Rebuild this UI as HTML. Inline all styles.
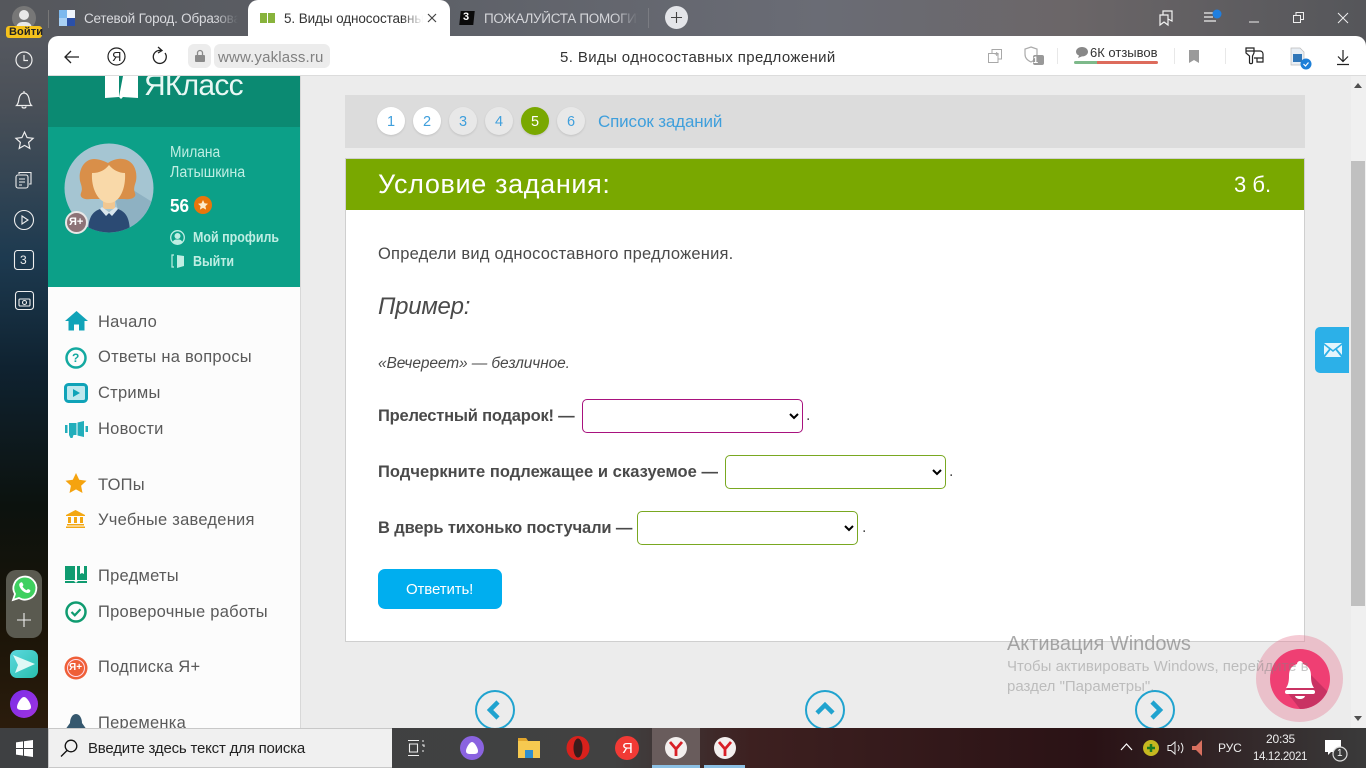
<!DOCTYPE html>
<html lang="ru"><head><meta charset="utf-8"><title>5. Виды односоставных предложений</title>
<style>
*{box-sizing:border-box}
html,body{margin:0;padding:0;width:1366px;height:768px;overflow:hidden;background:#ececec;font-family:"Liberation Sans",sans-serif;color:#4a4a4a}
.a{position:absolute}
.t{position:absolute;white-space:nowrap;line-height:1}
svg{position:absolute;overflow:visible}
select{position:absolute;height:34px;width:221px;background:#fff;border-radius:5px;border:1px solid #79a821;font-size:14px;outline:0;padding:0}
.n{width:28px;height:28px;top:107px;border-radius:50%;text-align:center;line-height:30px;font-size:14.5px;color:#3f9fdc;position:absolute;background:#e8e8e8;box-shadow:0 1px 2px rgba(0,0,0,.12)}
.m{font-size:16.5px;left:50px;color:#5a5a5a;letter-spacing:.25px}
.b{font-weight:bold;font-size:16.5px;color:#4a4a4a;left:378px}
.f{-webkit-mask-image:linear-gradient(90deg,#000 85%,transparent);mask-image:linear-gradient(90deg,#000 85%,transparent)}
</style></head><body>
<!-- top frame -->
<div class="a" style="left:0;top:0;width:1366px;height:768px;background:linear-gradient(90deg,#55575c 0,#5d6067 30%,#6a6c75 60%,#6b6668 78%,#55565a 100%)"></div>
<div class="a" style="left:0;top:36px;width:48px;height:692px;background:linear-gradient(180deg,#55585f 0,#4a5058 10%,#1d3a50 32%,#0f2230 48%,#0c120e 68%,#1a1408 85%,#2b1c0c 100%)"></div>
<!-- tabs -->
<div class="a" style="left:48px;top:10px;width:1px;height:18px;background:#777"></div>
<svg style="left:12px;top:5px" width="26" height="26" viewBox="0 0 26 26"><circle cx="12" cy="13" r="12" fill="#777"/><circle cx="12" cy="10" r="5" fill="#e8e8e8"/><path d="M4 23c1-6 5-6 8-6s7 0 8 6z" fill="#e8e8e8"/></svg>
<div class="a" style="left:6px;top:26px;width:36px;height:12px;background:#f6c21c;border-radius:3px"></div>
<div class="t" style="left:9px;top:27px;font-size:11px;font-weight:bold;color:#222;letter-spacing:.1px">Войти</div>
<svg style="left:59px;top:10px" width="16" height="16"><rect width="16" height="16" fill="#eef4fb"/><rect x="0" y="0" width="8" height="8" fill="#7cb8ee"/><rect x="8" y="8" width="8" height="8" fill="#2b50a8"/><rect x="0" y="8" width="8" height="8" fill="#a9d1f5"/></svg>
<div class="t f" style="left:84px;top:11px;font-size:13.5px;color:#d9dade;width:154px;overflow:hidden;letter-spacing:-.2px;line-height:15px">Сетевой Город. Образова</div>
<div class="a" style="left:248px;top:0;width:202px;height:37px;background:#fff;border-radius:10px 10px 0 0"></div>
<svg style="left:260px;top:13px" width="15" height="11"><rect width="7" height="10" fill="#88b33c"/><rect x="8" width="7" height="10" fill="#88b33c"/></svg>
<div class="t f" style="left:284px;top:11px;font-size:13.5px;color:#333;width:139px;overflow:hidden;line-height:15px;letter-spacing:-.1px">5. Виды односоставных</div>
<svg style="left:426px;top:12px" width="12" height="12"><path d="M2 2l8 8M10 2l-8 8" stroke="#444" stroke-width="1.2"/></svg>
<div class="a" style="left:460px;top:11px;width:14px;height:14px;background:#0a0a0a;transform:skewX(-6deg)"></div>
<div class="t" style="left:463px;top:12px;font-size:11px;font-weight:bold;color:#fff">3</div>
<div class="t f" style="left:484px;top:11px;font-size:13.5px;color:#d5d6da;width:154px;overflow:hidden;line-height:15px;letter-spacing:-.3px">ПОЖАЛУЙСТА ПОМОГИТ</div>
<div class="a" style="left:648px;top:8px;width:1px;height:20px;background:#7a7c82"></div>
<div class="a" style="left:665px;top:6px;width:23px;height:23px;border-radius:50%;background:#e4e5e9"></div>
<svg style="left:670px;top:11px" width="13" height="13"><path d="M6.500 1v11M1 6.500h11" stroke="#444" stroke-width="1.100"/></svg>
<!-- window controls -->
<svg style="left:1158px;top:10px" width="16" height="16" fill="none" stroke="#f2f2f2" stroke-width="1.200"><path d="M2 5h8v10l-4-3-4 3zM5 5V1h9v10l-4-2"/></svg>
<svg style="left:1203px;top:9px" width="20" height="15"><path d="M1 4h9M1 8h9M1 12h12" stroke="#eee" stroke-width="1.200"/><circle cx="14" cy="5" r="4.500" fill="#1f7fe0"/></svg>
<svg style="left:1249px;top:21px" width="10" height="2"><path d="M0 1h10" stroke="#eee"/></svg>
<svg style="left:1293px;top:12px" width="11" height="11" fill="none" stroke="#eee"><path d="M.5 3.500h7v7h-7zM3 3V.5h7.500v7H8"/></svg>
<svg style="left:1337px;top:12px" width="12" height="12"><path d="M1 1l10 10M11 1L1 11" stroke="#eee" stroke-width="1"/></svg>
<!-- sidebar icons -->
<svg style="left:15px;top:51px" width="18" height="18" fill="none" stroke="#eee" stroke-width="1.200"><circle cx="9" cy="9" r="8"/><path d="M9 4v5.500h4"/></svg>
<svg style="left:15px;top:91px" width="18" height="19" fill="none" stroke="#eee" stroke-width="1.200"><path d="M1.500 14.500c2-2 2-4 2.500-7S6.500 2 9 2s4.500 2.500 5 5.500.5 5 2.500 7zM7 15.500c0 2 4 2 4 0M9 0v2"/></svg>
<svg style="left:15px;top:131px" width="19" height="18" fill="none" stroke="#eee" stroke-width="1.200"><path d="M9.500 1l2.600 5.600 6 .7-4.500 4.100 1.200 6-5.300-3-5.300 3 1.200-6L.9 7.300l6-.7z"/></svg>
<svg style="left:15px;top:171px" width="18" height="18" fill="none" stroke="#eee" stroke-width="1.100"><rect x="1" y="4" width="12" height="13" rx="2"/><path d="M4 3V1.500h12V13h-2M4 8h6M4 11h6M4 14h3"/></svg>
<svg style="left:14px;top:210px" width="20" height="20" fill="none" stroke="#eee" stroke-width="1.100"><circle cx="10" cy="10" r="9.500"/><path d="M8 6l6 4-6 4z"/></svg>
<svg style="left:14px;top:250px" width="20" height="20" fill="none" stroke="#eee" stroke-width="1.100"><rect x=".5" y=".5" width="19" height="19" rx="3"/></svg>
<div class="t" style="left:20px;top:254px;font-size:12px;color:#eee">3</div>
<svg style="left:15px;top:291px" width="19" height="20" fill="none" stroke="#eee" stroke-width="1.100"><rect x=".5" y=".5" width="18" height="18" rx="3"/><rect x="4" y="8" width="11" height="7" rx="1"/><circle cx="9.500" cy="11.500" r="2"/></svg>
<div class="a" style="left:6px;top:570px;width:36px;height:68px;border-radius:10px;background:#5a5a50"></div>
<svg style="left:12px;top:576px" width="25" height="25"><path d="M1 24l2-6a11.500 11.500 0 1 1 4 4z" fill="#3fd060" stroke="#fff" stroke-width="1.800"/><path d="M8 7c1-1 2-1 2.500 0l1 2-1 1.500c1 1.700 2.200 2.800 4 3.700l1.500-1.200 2.200 1c.5 1.500-.7 3-2.500 3-4 0-8-4.500-8.500-8 0-1 .3-1.500.8-2z" fill="#fff"/></svg>
<svg style="left:16px;top:612px" width="16" height="16"><path d="M8 1v14M1 8h14" stroke="#eee" stroke-width="1.100"/></svg>
<div class="a" style="left:10px;top:650px;width:28px;height:28px;border-radius:7px;background:linear-gradient(135deg,#5cd8de,#28bfae)"></div>
<svg style="left:12px;top:655px" width="24" height="18"><path d="M1 0l22 9L3 18l3-8z" fill="#dff8f6"/></svg>
<div class="a" style="left:10px;top:690px;width:28px;height:28px;border-radius:50%;background:linear-gradient(135deg,#7a2de8,#a033e0)"></div>
<svg style="left:17px;top:697px" width="14" height="13"><path d="M7 0c3 0 7 7 7 10s-3 3-7 3-7 0-7-3S4 0 7 0z" fill="#fff"/></svg>
<!-- toolbar -->
<div class="a" style="left:48px;top:36px;width:1318px;height:40px;background:#fff;border-radius:10px 10px 0 0;border-bottom:1px solid #dcdcdc"></div>
<svg style="left:64px;top:50px" width="16" height="14" fill="none" stroke="#222" stroke-width="1.300"><path d="M15 7H1M7 1L1 7l6 6"/></svg>
<svg style="left:107px;top:47px" width="19" height="19" fill="none" stroke="#222" stroke-width="1.200"><circle cx="9.500" cy="9.500" r="8.500"/></svg>
<div class="t" style="left:112px;top:50px;font-size:13px;color:#222">Я</div>
<svg style="left:152px;top:46px" width="16" height="18" fill="none" stroke="#222" stroke-width="1.300"><path d="M13 7a6.500 6.500 0 1 1-4-2.500M6 1l4 3.500L6 7"/></svg>
<div class="a" style="left:188px;top:44px;width:23px;height:24px;background:#ececec;border-radius:6px"></div>
<svg style="left:195px;top:49px" width="10" height="13"><path d="M2.500 6V4a2.500 2.500 0 0 1 5 0v2" fill="none" stroke="#8a8a8a" stroke-width="1.300"/><rect y="6" width="10" height="7" rx="1" fill="#8a8a8a"/></svg>
<div class="a" style="left:214px;top:44px;width:116px;height:24px;background:#ececec;border-radius:6px"></div>
<div class="t" style="left:218px;top:50px;font-size:15px;color:#808080;letter-spacing:.15px">www.yaklass.ru</div>
<div class="t" style="left:560px;top:50px;font-size:15px;color:#333;letter-spacing:.38px">5. Виды односоставных предложений</div>
<svg style="left:988px;top:49px" width="14" height="14" fill="none" stroke="#a8a8a8"><path d="M4 4V.5h9.500V10H10M.5 4.500H10V13.500H.5zM8.700 3v4M6.700 5h4"/></svg>
<svg style="left:1024px;top:46px" width="20" height="20"><path d="M7 1l6 2v5c0 4-2 6-6 8-4-2-6-4-6-8V3z" fill="none" stroke="#aaa" stroke-width="1.200"/><rect x="9" y="9" width="11" height="10" rx="2" fill="#999"/></svg>
<div class="t" style="left:1033px;top:56px;font-size:9px;font-weight:bold;color:#fff">1</div>
<div class="a" style="left:1057px;top:48px;width:1px;height:16px;background:#e8e8e8"></div>
<svg style="left:1076px;top:47px" width="12" height="11"><path d="M6 0c3.300 0 6 2 6 4.700S9.300 9.400 6 9.400L2 11l1-2.500C1 7.700 0 6.300 0 4.700 0 2 2.700 0 6 0z" fill="#888"/></svg>
<div class="t" style="left:1090px;top:46px;font-size:13px;color:#333">6К отзывов</div>
<div class="a" style="left:1074px;top:61px;width:23px;height:3px;background:#7db98a;border-radius:2px 0 0 2px"></div>
<div class="a" style="left:1097px;top:61px;width:61px;height:3px;background:#dd6b5c;border-radius:0 2px 2px 0"></div>
<div class="a" style="left:1174px;top:48px;width:1px;height:16px;background:#e8e8e8"></div>
<svg style="left:1189px;top:50px" width="10" height="13"><path d="M0 0h10v13l-5-3-5 3z" fill="#9a9a9a"/></svg>
<div class="a" style="left:1225px;top:48px;width:1px;height:16px;background:#e8e8e8"></div>
<svg style="left:1245px;top:47px" width="19" height="18" fill="none" stroke="#222" stroke-width="1.200"><path d="M1 1h8v5L7.500 9v6.500c0 1.500-3 1.500-3 0V9L1 6zM1 4h8M9 4h6a3 3 0 0 1 3 3v4H9M12 11v4h6v-4"/></svg>
<svg style="left:1291px;top:47px" width="22" height="23"><path d="M0 1h9l4 4v13H0z" fill="#e8eef4" stroke="#bbb" stroke-width=".7"/><rect x="2" y="7" width="9" height="8" fill="#2f76b8"/><circle cx="15" cy="17" r="5.500" fill="#1d7fd8"/><path d="M12.500 17l2 2 3-3.500" stroke="#fff" fill="none" stroke-width="1.200"/></svg>
<svg style="left:1336px;top:50px" width="14" height="15" fill="none" stroke="#222" stroke-width="1.200"><path d="M7 0v11M2 6.500L7 11.500l5-5M1 14.500h12"/></svg>
<!-- page -->
<div class="a" style="left:48px;top:76px;width:1318px;height:652px;background:#ececec;overflow:hidden">
<div class="a" style="left:0;top:0;width:253px;height:652px;background:#fcfcfc;border-right:1px solid #d8d8d8"></div>
<div class="a" style="left:0;top:0;width:252px;height:51px;background:#0b8a72"></div>
<div class="a" style="left:0;top:51px;width:252px;height:160px;background:#0ca088"></div>
<svg style="left:57px;top:0" width="33" height="24"><path d="M0 0h14v21l-14 1zM18 0h15v22l-15-1-2 2-2-2z" fill="#fff"/></svg>
<div class="t" style="left:96px;top:-5px;font-size:30px;color:#e8f8f4;letter-spacing:-.75px">ЯКласс</div>
<!-- avatar -->
<svg style="left:16px;top:67px" width="90" height="90" viewBox="0 0 90 90"><defs><clipPath id="c"><circle cx="45" cy="45" r="44.500"/></clipPath></defs><circle cx="45" cy="45" r="44.500" fill="#a5c5d2"/><g clip-path="url(#c)"><path d="M45 32L90 60V90H60z" fill="#8eb1c2"/><path d="M27 56c-6 1-12-1-10-6 2-5 0-8-1-12-2-12 5-22 14-22 5 0 10 2 14 4 4-3 10-5 15-4 9 1 15 10 13 22-1 4-3 7-1 12 2 5-5 7-11 6z" fill="#d98f49"/><path d="M39 52h12v14H39z" fill="#f1c791"/><path d="M28 30c8 0 13-3 17-8 4 5 10 8 16 8 1 15-5 30-16 30S27 45 28 30z" fill="#f9d9a9"/><path d="M24 92c0-18 4-24 15-27l6 4 6-4c11 3 15 9 15 27z" fill="#2b4a73"/><path d="M38 64l7 5 7-5 2 2-6 7-3-3-3 3-6-7z" fill="#d9e6ed"/></g></svg>
<div class="a" style="left:17px;top:135px;width:23px;height:23px;border-radius:50%;background:#8d7377;border:2px solid #e8e8e8"></div>
<div class="t" style="left:21px;top:141px;font-size:11px;font-weight:bold;color:#fff">Я+</div>
<div class="t" style="left:122px;top:69px;font-size:15.5px;color:#bfeee3;transform:scaleX(.89);transform-origin:0 0">Милана</div>
<div class="t" style="left:122px;top:89px;font-size:15.5px;color:#bfeee3;transform:scaleX(.92);transform-origin:0 0">Латышкина</div>
<div class="t" style="left:122px;top:121px;font-size:18px;font-weight:bold;color:#fff;transform:scaleX(.95);transform-origin:0 0">56</div>
<div class="a" style="left:146px;top:120px;width:18px;height:18px;border-radius:50%;background:#e8760c"></div>
<svg style="left:150px;top:124px" width="10" height="10"><path d="M5 0l1.500 3.300 3.500.4-2.600 2.400.7 3.500L5 7.900 1.900 9.600l.7-3.500L0 3.700l3.500-.4z" fill="#fdeacb"/></svg>
<svg style="left:122px;top:154px" width="15" height="15"><circle cx="7.500" cy="7.500" r="6.800" fill="none" stroke="#bfeee3" stroke-width="1.300"/><circle cx="7.500" cy="6" r="3" fill="#bfeee3"/><path d="M2.500 12.500c1-3 3-3 5-3s4 0 5 3l-5 2z" fill="#bfeee3"/></svg>
<div class="t" style="left:145px;top:155px;font-size:14.5px;font-weight:bold;color:#bfeee3;transform:scaleX(.86);transform-origin:0 0">Мой профиль</div>
<svg style="left:123px;top:178px" width="14" height="14"><path d="M3 1H1v12h2" fill="none" stroke="#bfeee3" stroke-width="1.200"/><path d="M6 1l7 1v10l-7 2z" fill="#bfeee3"/></svg>
<div class="t" style="left:145px;top:179px;font-size:14.5px;font-weight:bold;color:#bfeee3;transform:scaleX(.86);transform-origin:0 0">Выйти</div>
<!-- menu -->
<svg style="left:17px;top:235px" width="23" height="20"><path d="M11.500 0L23 10h-3.500v9.500H14v-6H9v6H3.500V10H0z" fill="#10a3b8"/></svg>
<svg style="left:17px;top:271px" width="22" height="22" fill="none"><circle cx="11" cy="11" r="9.500" stroke="#14a9a0" stroke-width="2.500"/></svg>
<div class="t" style="left:24px;top:276px;font-size:12px;font-weight:bold;color:#14a9a0">?</div>
<svg style="left:16px;top:307px" width="24" height="20"><rect x="1.500" y="1.500" width="21" height="17" rx="3" fill="#bfe8ee" stroke="#10a3b8" stroke-width="3"/><path d="M9 6l7 4-7 4z" fill="#10a3b8"/></svg>
<svg style="left:17px;top:344px" width="23" height="18"><path d="M0 5h2.500v8H0zM4 3h7.500v12H8.500l-1 3H5.500l-1.500-3zM12.500 2.500L19 1v16l-6.500-1.500zM20.500 6H23v6h-2.500z" fill="#22aebb"/></svg>
<svg style="left:17px;top:397px" width="22" height="21"><path d="M11 0l3.200 6.800 7.300.9-5.400 5 1.400 7.300L11 16.400 4.500 20l1.400-7.300-5.400-5 7.300-.9z" fill="#f5a30f"/></svg>
<svg style="left:18px;top:434px" width="19" height="18"><path d="M9.500 0L19 5v1H0V5z" fill="#f3a712"/><path d="M2 7h3v6H2zM8 7h3v6H8zM14 7h3v6h-3zM1 14h17v1.500H1zM0 16.500h19V18H0z" fill="#f3a712"/></svg>
<svg style="left:17px;top:490px" width="22" height="17"><path d="M0 0h10v14H0zM12 0h3v8l2-1 2 1V0h3v14H12zM0 15h9l2 2 2-2h9v2H0z" fill="#0f9b70"/></svg>
<svg style="left:17px;top:525px" width="22" height="22" fill="none"><circle cx="11" cy="11" r="9.500" stroke="#0f9b70" stroke-width="2.500"/><path d="M6.500 11l3.300 3.300 5.700-6" stroke="#0f9b70" stroke-width="2.200"/></svg>
<svg style="left:16px;top:580px" width="24" height="24"><circle cx="12" cy="12" r="11.500" fill="#ef5f38"/><circle cx="12" cy="12" r="8.500" fill="none" stroke="#fde" stroke-width="1"/></svg>
<div class="t" style="left:21px;top:587px;font-size:10px;font-weight:bold;color:#fff">Я+</div>
<svg style="left:17px;top:638px" width="22" height="16"><path d="M11 0c4 0 6 5 6 9l5 7H0l5-7c0-4 2-9 6-9z" fill="#36586e"/></svg>
<div class="t m" style="top:238px">Начало</div>
<div class="t m" style="top:273px">Ответы на вопросы</div>
<div class="t m" style="top:309px">Стримы</div>
<div class="t m" style="top:345px">Новости</div>
<div class="t m" style="top:401px">ТОПы</div>
<div class="t m" style="top:436px">Учебные заведения</div>
<div class="t m" style="top:492px">Предметы</div>
<div class="t m" style="top:528px">Проверочные работы</div>
<div class="t m" style="top:583px">Подписка Я+</div>
<div class="t m" style="top:639px">Переменка</div>
</div>
<!-- content -->
<div class="a" style="left:345px;top:95px;width:960px;height:53px;background:#dcdcdc"></div>
<div class="n" style="left:377px;background:#fff">1</div>
<div class="n" style="left:413px;background:#fff">2</div>
<div class="n" style="left:449px">3</div>
<div class="n" style="left:485px">4</div>
<div class="n" style="left:521px;background:#79a800;color:#fff">5</div>
<div class="n" style="left:557px">6</div>
<div class="t" style="left:598px;top:113px;font-size:17px;color:#3f9fdc;letter-spacing:-.15px">Список заданий</div>
<div class="a" style="left:345px;top:158px;width:960px;height:484px;background:#fff;border:1px solid #cfcfcf"></div>
<div class="a" style="left:346px;top:159px;width:958px;height:51px;background:#79a800"></div>
<div class="t" style="left:378px;top:171px;font-size:27px;color:#fff;letter-spacing:.65px">Условие задания:</div>
<div class="t" style="left:1234px;top:174px;font-size:22px;color:#fff">3 б.</div>
<div class="t" style="left:378px;top:246px;font-size:16.5px;color:#4a4a4a;letter-spacing:.22px">Определи вид односоставного предложения.</div>
<div class="t" style="left:378px;top:295px;font-size:24px;font-style:italic;color:#4a4a4a;letter-spacing:-.25px">Пример:</div>
<div class="t" style="left:378px;top:356px;font-size:15.5px;font-style:italic;color:#4a4a4a;letter-spacing:-.1px">«Вечереет» — безличное.</div>
<div class="t b" style="top:408px;letter-spacing:-.21px">Прелестный подарок! —</div>
<select style="left:582px;top:399px;border-color:#a8127e"><option></option></select>
<div class="t" style="left:806px;top:408px;font-size:16px">.</div>
<div class="t b" style="top:464px;letter-spacing:.05px">Подчеркните подлежащее и сказуемое —</div>
<select style="left:725px;top:455px"><option></option></select>
<div class="t" style="left:949px;top:464px;font-size:16px">.</div>
<div class="t b" style="top:520px;letter-spacing:-.13px">В дверь тихонько постучали —</div>
<select style="left:637px;top:511px"><option></option></select>
<div class="t" style="left:862px;top:520px;font-size:16px">.</div>
<div class="a" style="left:378px;top:569px;width:124px;height:40px;background:#00aeef;border-radius:7px"></div>
<div class="t" style="left:406px;top:582px;font-size:15px;color:#fff;letter-spacing:-.12px">Ответить!</div>
<!-- bottom arrows -->
<svg style="left:475px;top:690px" width="40" height="40" fill="none" stroke="#20a3cf" stroke-width="2"><circle cx="20" cy="20" r="19"/><path d="M23 12l-8 8 8 8" stroke-width="4.500"/></svg>
<svg style="left:805px;top:690px" width="40" height="40" fill="none" stroke="#20a3cf" stroke-width="2"><circle cx="20" cy="20" r="19"/><path d="M12 23l8-8 8 8" stroke-width="4.500"/></svg>
<svg style="left:1135px;top:690px" width="40" height="40" fill="none" stroke="#20a3cf" stroke-width="2"><circle cx="20" cy="20" r="19"/><path d="M17 12l8 8-8 8" stroke-width="4.500"/></svg>
<!-- mail -->
<div class="a" style="left:1315px;top:327px;width:34px;height:46px;background:#2cb0e8;border-radius:5px 0 0 5px"></div>
<svg style="left:1324px;top:343px" width="18" height="14"><path d="M0 0h18L9 7zM0 2l5 4-5 6zM18 2l-5 4 5 6zM1 14l5.500-7L9 9l2.500-2 5.500 7z" fill="#e4f5fc"/></svg>
<!-- scrollbar -->
<div class="a" style="left:1351px;top:76px;width:15px;height:652px;background:#f0f0f0"></div>
<div class="a" style="left:1351px;top:161px;width:14px;height:445px;background:#c0c0c0"></div>
<svg style="left:1354px;top:83px" width="8" height="5"><path d="M4 0l4 5H0z" fill="#505050"/></svg>
<svg style="left:1354px;top:716px" width="8" height="5"><path d="M4 5L8 0H0z" fill="#505050"/></svg>
<!-- bell -->
<div class="a" style="left:1256px;top:635px;width:87px;height:87px;border-radius:50%;background:rgba(232,130,155,.42)"></div>
<svg style="left:1270px;top:649px" width="60" height="60"><defs><clipPath id="d"><circle cx="30" cy="30" r="30"/></clipPath></defs><circle cx="30" cy="30" r="30" fill="#ef3f73"/><path d="M30 15L60 45V60H30L16 42z" fill="#c93263" clip-path="url(#d)"/><path d="M27 15a3 3 0 0 1 6 0c6 2 8 6 8 12 0 6 1 9 3 12H16c2-3 3-6 3-12 0-6 2-10 8-12z" fill="#fff"/><rect x="15" y="41" width="30" height="4" rx="2" fill="#fff"/><path d="M25 47h10c-1 4-9 4-10 0z" fill="#fff"/></svg>
<!-- activation watermark -->
<div class="t" style="left:1007px;top:634px;font-size:20px;color:rgba(110,110,110,.58);letter-spacing:-.03px">Активация Windows</div>
<div class="t" style="left:1007px;top:659px;font-size:15px;color:rgba(130,130,130,.45)">Чтобы активировать Windows, перейдите в</div>
<div class="t" style="left:1007px;top:679px;font-size:15px;color:rgba(130,130,130,.45)">раздел "Параметры".</div>
<!-- taskbar -->
<div class="a" style="left:0;top:728px;width:1366px;height:40px;background:linear-gradient(90deg,#3e4042 0,#414141 45%,#3d2020 55%,#2a1215 80%,#3a3a3a 100%)"></div>
<svg style="left:16px;top:740px" width="17" height="17"><path d="M0 2.400L7 1.400V8H0zM8 1.300L17 0V8H8zM0 9h7v6.600L0 14.600zM8 9h9v8l-9-1.300z" fill="#fff"/></svg>
<div class="a" style="left:48px;top:728px;width:344px;height:40px;background:#f0f0f0;border:1px solid #c8c8c8;border-width:1px 0 1px 1px"></div>
<svg style="left:60px;top:739px" width="18" height="18" fill="none" stroke="#111" stroke-width="1.300"><circle cx="11" cy="7" r="5.800"/><path d="M7 11.500L1 17.500"/></svg>
<div class="t" style="left:88px;top:741px;font-size:15px;color:#222;letter-spacing:-.2px">Введите здесь текст для поиска</div>
<svg style="left:407px;top:740px" width="18" height="16" fill="none" stroke="#eee" stroke-width="1.100"><path d="M1 .5h11M1 15.500h11M2.500 4h8v8h-8zM15 1h2M15 5h2v2M15 11h2"/></svg>
<div class="a" style="left:460px;top:736px;width:24px;height:24px;border-radius:50%;background:#8a63e0"></div>
<svg style="left:466px;top:742px" width="12" height="12"><path d="M6 0c2.500 0 6 6 6 9s-2.500 3-6 3-6 0-6-3S3.500 0 6 0z" fill="#fff"/></svg>
<svg style="left:518px;top:738px" width="22" height="20"><path d="M0 0h8l2 3h12v17H0z" fill="#f6c950"/><path d="M0 0h8l2 3H0z" fill="#e2a62c"/><rect x="7" y="12" width="8" height="8" fill="#2e8fd0"/></svg>
<svg style="left:566px;top:736px" width="24" height="24"><ellipse cx="12" cy="12" rx="11.500" ry="12" fill="#d8211c"/><ellipse cx="12" cy="12" rx="4.500" ry="9.500" fill="#3a1c1c"/></svg>
<div class="a" style="left:615px;top:736px;width:24px;height:24px;border-radius:50%;background:#f13a35"></div>
<div class="t" style="left:622px;top:741px;font-size:15px;color:#fff">Я</div>
<div class="a" style="left:652px;top:728px;width:48px;height:40px;background:#695c5c"></div>
<div class="a" style="left:652px;top:765px;width:48px;height:3px;background:#8cc0e4"></div>
<div class="a" style="left:704px;top:765px;width:41px;height:3px;background:#8cc0e4"></div>
<div class="a" style="left:665px;top:737px;width:22px;height:22px;border-radius:50%;background:#f3efee"></div>
<svg style="left:669px;top:741px" width="14" height="15"><path d="M1 1l6 7 6-7M7 8v7" fill="none" stroke="#d81f26" stroke-width="2.800"/></svg>
<div class="a" style="left:714px;top:737px;width:22px;height:22px;border-radius:50%;background:#f3efee"></div>
<svg style="left:718px;top:741px" width="14" height="15"><path d="M1 1l6 7 6-7M7 8v7" fill="none" stroke="#d81f26" stroke-width="2.800"/></svg>
<!-- tray -->
<svg style="left:1120px;top:743px" width="13" height="8" fill="none" stroke="#fff" stroke-width="1.200"><path d="M1 7l5.500-6L12 7"/></svg>
<svg style="left:1143px;top:740px" width="16" height="16"><circle cx="8" cy="8" r="8" fill="#c6b820"/><path d="M8 4v8M4 8h8" stroke="#1a7a24" stroke-width="2.500"/></svg>
<svg style="left:1167px;top:741px" width="17" height="14" fill="none" stroke="#eee"><path d="M1 4.500h3L8 1v12L4 9.500H1zM11 4c1.500 2 1.500 4 0 6M14 2c2.500 3 2.500 7 0 10"/></svg>
<svg style="left:1192px;top:740px" width="10" height="16"><path d="M10 0v16L4 10H0V6h4z" fill="#d8705f"/></svg>
<div class="t" style="left:1218px;top:742px;font-size:12px;color:#eee;letter-spacing:-.1px">РУС</div>
<div class="t" style="left:1266px;top:733px;font-size:12px;color:#eee;letter-spacing:-.2px">20:35</div>
<div class="t" style="left:1253px;top:752px;font-size:11.5px;color:#eee;letter-spacing:-.35px">14.12.2021</div>
<svg style="left:1325px;top:740px" width="24" height="22"><path d="M0 0h16v12H6l-3 3v-3H0z" fill="#fff"/><circle cx="15" cy="14" r="7" fill="#3a3a3a" stroke="#ddd" stroke-width="1.200"/></svg>
<div class="t" style="left:1337px;top:749px;font-size:10px;color:#fff">1</div>
</body></html>
